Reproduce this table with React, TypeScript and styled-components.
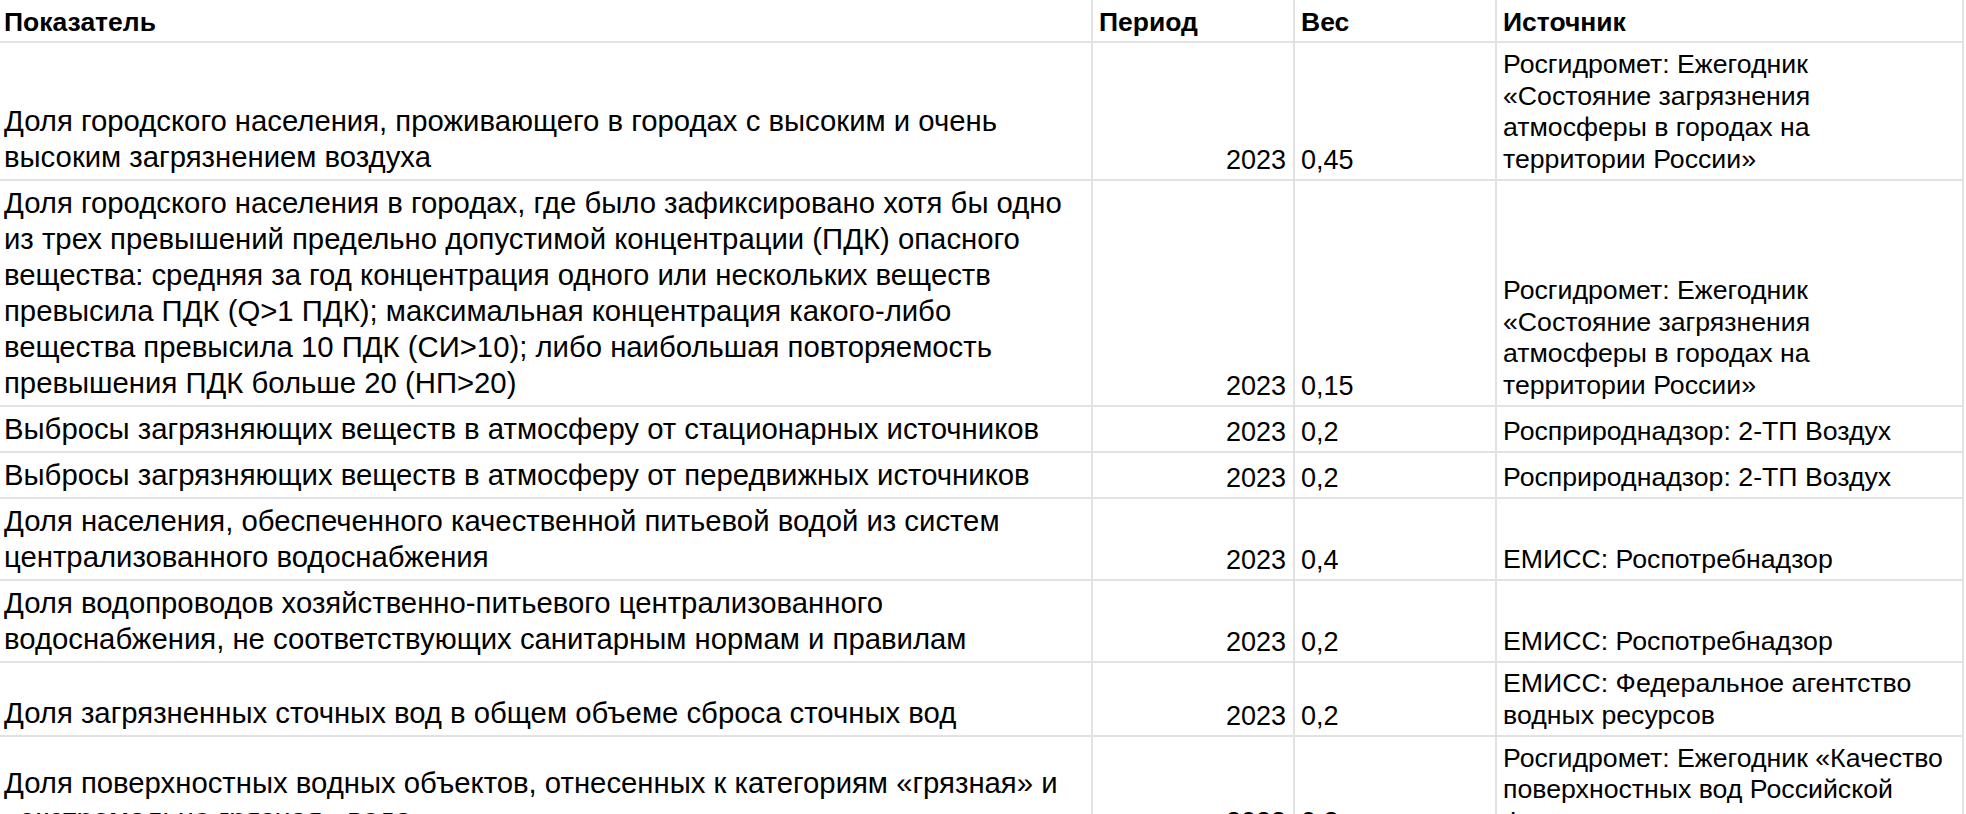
import React from "react";
import styled, { createGlobalStyle } from "styled-components";

type Row = {
  name: string[];
  period: string;
  weight: string;
  source: string[];
  height: number;
};

const ROWS: Row[] = [
  {
    name: [
      "Доля городского населения, проживающего в городах с высоким и очень",
      "высоким загрязнением воздуха",
    ],
    period: "2023",
    weight: "0,45",
    source: [
      "Росгидромет: Ежегодник",
      "«Состояние загрязнения",
      "атмосферы в городах на",
      "территории России»",
    ],
    height: 138,
  },
  {
    name: [
      "Доля городского населения в городах, где было зафиксировано хотя бы одно",
      "из трех превышений предельно допустимой концентрации (ПДК) опасного",
      "вещества: средняя за год концентрация одного или нескольких веществ",
      "превысила ПДК (Q>1 ПДК); максимальная концентрация какого-либо",
      "вещества превысила 10 ПДК (СИ>10); либо наибольшая повторяемость",
      "превышения ПДК больше 20 (НП>20)",
    ],
    period: "2023",
    weight: "0,15",
    source: [
      "Росгидромет: Ежегодник",
      "«Состояние загрязнения",
      "атмосферы в городах на",
      "территории России»",
    ],
    height: 226,
  },
  {
    name: ["Выбросы загрязняющих веществ в атмосферу от стационарных источников"],
    period: "2023",
    weight: "0,2",
    source: ["Росприроднадзор: 2-ТП Воздух"],
    height: 46,
  },
  {
    name: ["Выбросы загрязняющих веществ в атмосферу от передвижных источников"],
    period: "2023",
    weight: "0,2",
    source: ["Росприроднадзор: 2-ТП Воздух"],
    height: 46,
  },
  {
    name: [
      "Доля населения, обеспеченного качественной питьевой водой из систем",
      "централизованного водоснабжения",
    ],
    period: "2023",
    weight: "0,4",
    source: ["ЕМИСС: Роспотребнадзор"],
    height: 82,
  },
  {
    name: [
      "Доля водопроводов хозяйственно-питьевого централизованного",
      "водоснабжения, не соответствующих санитарным нормам и правилам",
    ],
    period: "2023",
    weight: "0,2",
    source: ["ЕМИСС: Роспотребнадзор"],
    height: 82,
  },
  {
    name: ["Доля загрязненных сточных вод в общем объеме сброса сточных вод"],
    period: "2023",
    weight: "0,2",
    source: ["ЕМИСС: Федеральное агентство", "водных ресурсов"],
    height: 74,
  },
  {
    name: [
      "Доля поверхностных водных объектов, отнесенных к категориям «грязная» и",
      "«экстремально грязная» вода",
    ],
    period: "2023",
    weight: "0,2",
    source: [
      "Росгидромет: Ежегодник «Качество",
      "поверхностных вод Российской",
      "Федерации»",
    ],
    height: 106,
  },
];

const COLUMNS = [1092, 202, 202, 467];

const lines = (arr: string[]) =>
  arr.map((l, i) => (
    <React.Fragment key={i}>
      {i > 0 ? <br /> : null}
      {l}
    </React.Fragment>
  ));

function App() {
  return (
    <>
      <GlobalStyle />
      <Sheet>
        <colgroup>
          {COLUMNS.map((w, i) => (
            <Col key={i} $w={w} />
          ))}
        </colgroup>
        <thead>
          <SheetRow $h={42}>
            <HeadCell $first>Показатель</HeadCell>
            <HeadCell>Период</HeadCell>
            <HeadCell>Вес</HeadCell>
            <HeadCell>Источник</HeadCell>
          </SheetRow>
        </thead>
        <tbody>
          {ROWS.map((r, i) => (
            <SheetRow key={i} $h={r.height}>
              <NameCell>{lines(r.name)}</NameCell>
              <NumCell $right>{r.period}</NumCell>
              <NumCell>{r.weight}</NumCell>
              <SourceCell>{lines(r.source)}</SourceCell>
            </SheetRow>
          ))}
        </tbody>
      </Sheet>
    </>
  );
}

export default App;

const GlobalStyle = createGlobalStyle`
  html, body {
    margin: 0;
    padding: 0;
    background: #fff;
    overflow: hidden;
  }
  body {
    font-family: "Liberation Sans", Arial, sans-serif;
    color: #000;
  }
`;

const Sheet = styled.table`
  border-collapse: collapse;
  table-layout: fixed;
  width: 1964px;
  border-right: 2px solid #e2e2e2;

  td, th {
    border: 2px solid #e2e2e2;
    vertical-align: bottom;
    white-space: nowrap;
    overflow: hidden;
  }
  tr > :first-child {
    border-left: none;
  }
  thead th {
    border-top: none;
  }
`;

const Col = styled.col<{ $w: number }>`
  width: ${(p) => p.$w}px;
`;

const SheetRow = styled.tr<{ $h: number }>`
  height: ${(p) => p.$h}px;
`;

const HeadCell = styled.th<{ $first?: boolean }>`
  font-size: 26.5px;
  font-weight: bold;
  text-align: left;
  line-height: 31px;
  padding: 0 6px 3px ${(p) => (p.$first ? "4px" : "6px")};
`;

const NameCell = styled.td`
  font-size: 29.3px;
  line-height: 36px;
  padding: 0 6px 4px 4px;
`;

const NumCell = styled.td<{ $right?: boolean }>`
  font-size: 27px;
  line-height: 31px;
  text-align: ${(p) => (p.$right ? "right" : "left")};
  padding: 0 7px 3px 6px;
`;

const SourceCell = styled.td`
  font-size: 26.7px;
  line-height: 31.8px;
  padding: 0 6px 3px 6px;
`;
